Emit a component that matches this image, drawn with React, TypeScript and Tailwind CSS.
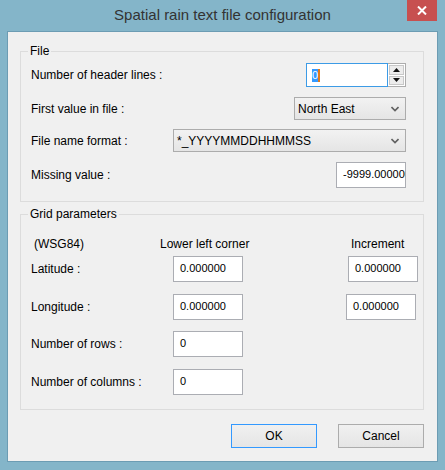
import type { ReactNode } from "react";

function GroupBox({ title, className, children }: { title: string; className?: string; children: ReactNode }) {
  return (
    <div className={`relative border border-[#dcdcdc] ${className ?? ""}`}>
      <span className="absolute left-[7px] top-[-8px] h-[14px] bg-[#f0f0f0] px-[2px] text-[12px] leading-[14px]">
        {title}
      </span>
      {children}
    </div>
  );
}

function Edit({ value, className }: { value: string; className?: string }) {
  return (
    <div
      className={`h-[26px] w-[70px] overflow-hidden whitespace-nowrap border border-[#abadb3] bg-white pl-[6px] pt-[4px] text-[11px] leading-[14px] ${className ?? ""}`}
    >
      {value}
    </div>
  );
}

function Chevron() {
  return (
    <svg width="8" height="6" viewBox="0 0 8 6" className="shrink-0">
      <path d="M0.5 1 L4 4.5 L7.5 1" fill="none" stroke="#606060" strokeWidth="1.6" />
    </svg>
  );
}

function Combo({ value, className }: { value: string; className?: string }) {
  return (
    <div
      className={`flex h-[23px] items-center justify-between border border-[#acacac] bg-gradient-to-b from-[#f2f2f2] to-[#e5e5e5] pl-[3px] pr-[6px] text-[12px] ${className ?? ""}`}
    >
      <span>{value}</span>
      <Chevron />
    </div>
  );
}

function SpinBox() {
  return (
    <div className="flex h-[24px] w-[100px]">
      <div className="flex h-full w-[82px] items-center border border-[#3c9be6] bg-white pl-[5px]">
        <span className="h-[13px] w-[8px] border-r-2 border-[#e07a1a] bg-[#3399ff] text-[11px] leading-[13px] text-white">
          0
        </span>
      </div>
      <div className="flex h-full w-[18px] flex-col gap-[1px] border border-l-0 border-[#acacac] bg-white p-[1px]">
        <div className="flex flex-1 items-center justify-center border border-[#c8c8c8] bg-[#ececec]">
          <svg width="7" height="4" viewBox="0 0 7 4">
            <path d="M0 4 L3.5 0 L7 4 Z" fill="#111" />
          </svg>
        </div>
        <div className="flex flex-1 items-center justify-center border border-[#c8c8c8] bg-[#ececec]">
          <svg width="7" height="4" viewBox="0 0 7 4">
            <path d="M0 0 L3.5 4 L7 0 Z" fill="#111" />
          </svg>
        </div>
      </div>
    </div>
  );
}

function Button({ label, primary }: { label: string; primary?: boolean }) {
  return (
    <div
      className={`flex h-[24px] w-[86px] items-center justify-center border bg-gradient-to-b from-[#f0f0f0] to-[#e5e5e5] text-[12px] ${
        primary ? "border-[#3399ff]" : "border-[#acacac]"
      }`}
    >
      {label}
    </div>
  );
}

export default function App() {
  return (
    <div className="flex h-[470px] w-[445px] flex-col bg-[#84b5c9] font-['Liberation_Sans',Arial,sans-serif] text-black">
      <div className="flex h-[31px] shrink-0 items-start">
        <div className="w-[407px] pl-[38px] pt-[6px] text-center text-[15px] leading-[18px] text-[#333]">
          Spatial rain text file configuration
        </div>
        <div className="flex h-[21px] w-[30px] items-center justify-center bg-[#c75050]">
          <svg width="10" height="9" viewBox="0 0 10 9">
            <path d="M1 0.5 L9 8.5 M9 0.5 L1 8.5" stroke="#fff" strokeWidth="2" />
          </svg>
        </div>
      </div>

      <div className="mx-[7px] h-[431px] border border-[#6c9cb3] bg-[#f0f0f0] pl-[12px] pr-[13px] pt-[19px]">
        <GroupBox title="File" className="pb-[14px] pl-[10px] pr-[17px]">
          <div className="mt-[11px] flex h-[24px] items-center justify-between text-[12px]">
            <span>Number of header lines :</span>
            <SpinBox />
          </div>
          <div className="mt-[10px] flex h-[23px] items-center justify-between text-[12px]">
            <span>First value in file :</span>
            <Combo value="North East" className="w-[112px]" />
          </div>
          <div className="mt-[9px] flex h-[23px] items-center justify-between text-[12px]">
            <span>File name format :</span>
            <Combo value="*_YYYYMMDDHHMMSS" className="w-[233px]" />
          </div>
          <div className="mt-[10px] flex h-[25px] items-center justify-between text-[12px]">
            <span>Missing value :</span>
            <Edit value="-9999.000000" className="h-[25px]" />
          </div>
        </GroupBox>

        <GroupBox title="Grid parameters" className="mt-[12px] pb-[14px] pl-[10px]">
          <div className="mt-[22px] flex h-[14px] items-center text-[12px] leading-[14px]">
            <span className="w-[129px] pl-[3px]">(WSG84)</span>
            <span className="w-[191px]">Lower left corner</span>
            <span>Increment</span>
          </div>
          <div className="mt-[5px] flex h-[26px] items-center text-[12px]">
            <span className="w-[142px]">Latitude :</span>
            <Edit value="0.000000" />
            <Edit value="0.000000" className="ml-[105px]" />
          </div>
          <div className="mt-[12px] flex h-[26px] items-center text-[12px]">
            <span className="w-[142px]">Longitude :</span>
            <Edit value="0.000000" />
            <Edit value="0.000000" className="ml-[103px]" />
          </div>
          <div className="mt-[11px] flex h-[26px] items-center text-[12px]">
            <span className="w-[142px]">Number of rows :</span>
            <Edit value="0" />
          </div>
          <div className="mt-[12px] flex h-[26px] items-center text-[12px]">
            <span className="w-[142px]">Number of columns :</span>
            <Edit value="0" />
          </div>
        </GroupBox>

        <div className="mt-[14px] flex justify-end gap-[21px]">
          <Button label="OK" primary />
          <Button label="Cancel" />
        </div>
      </div>
    </div>
  );
}
